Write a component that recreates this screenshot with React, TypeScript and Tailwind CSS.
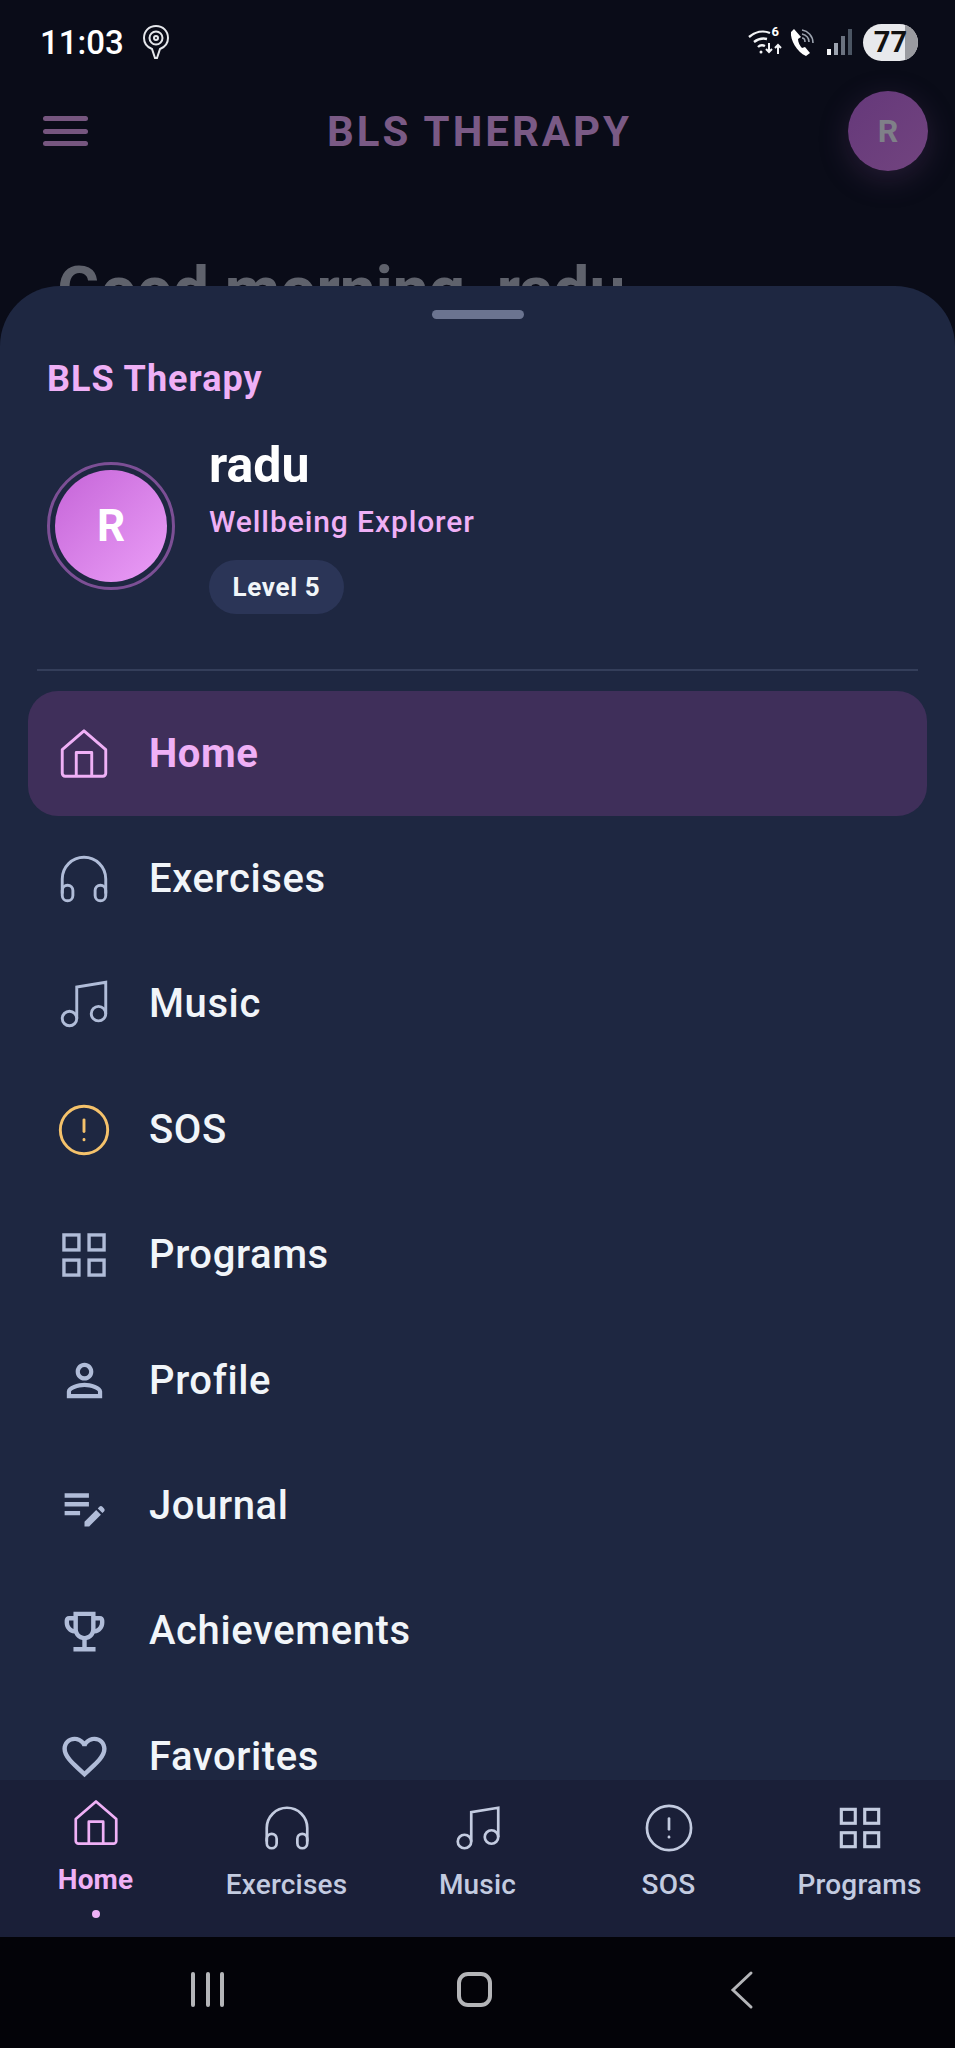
import React from 'react';
import { MdOutlinePersonOutline, MdEditNote, MdOutlineEmojiEvents, MdFavoriteBorder } from 'react-icons/md';

type IconProps = { className?: string };

function HomeIcon({ className }: IconProps) {
  return (
    <svg viewBox="0 0 24 24" fill="none" stroke="currentColor" strokeWidth="1.2" strokeLinejoin="round" className={className}>
      <path d="M3 10.2 12 2.4l9 7.8V20a1.2 1.2 0 0 1-1.2 1.2H4.2A1.2 1.2 0 0 1 3 20z" />
      <path d="M8.8 21.2v-9.8h6.4v9.8" />
    </svg>
  );
}

function HeadphonesIcon({ className }: IconProps) {
  return (
    <svg viewBox="0 0 24 24" fill="none" stroke="currentColor" strokeWidth="1.2" className={className}>
      <path d="M3 18v-6a9 9 0 0 1 18 0v6" />
      <rect x="3" y="14.6" width="4.4" height="6.4" rx="2.2" />
      <rect x="16.6" y="14.6" width="4.4" height="6.4" rx="2.2" />
    </svg>
  );
}

function MusicIcon({ className }: IconProps) {
  return (
    <svg viewBox="0 0 24 24" fill="none" stroke="currentColor" strokeWidth="1.2" className={className}>
      <path d="M9 18V5l12-2v13" />
      <circle cx="6" cy="18" r="3" />
      <circle cx="18" cy="16" r="3" />
    </svg>
  );
}

function AlertIcon({ className }: IconProps) {
  return (
    <svg viewBox="0 0 24 24" fill="none" stroke="currentColor" strokeWidth="1.2" strokeLinecap="round" className={className}>
      <circle cx="12" cy="12" r="9.8" />
      <path d="M12 7.8v4.8" />
      <path d="M12 15.9v.2" />
    </svg>
  );
}

function GridIcon({ className }: IconProps) {
  return (
    <svg viewBox="0 0 24 24" fill="none" stroke="currentColor" strokeWidth="1.4" className={className}>
      <rect x="3.7" y="3.7" width="6.2" height="6.2" />
      <rect x="14.1" y="3.7" width="6.2" height="6.2" />
      <rect x="3.7" y="14.1" width="6.2" height="6.2" />
      <rect x="14.1" y="14.1" width="6.2" height="6.2" />
    </svg>
  );
}

const menuItems = [
  { label: 'Home', icon: HomeIcon, big: true },
  { label: 'Exercises', icon: HeadphonesIcon, big: true },
  { label: 'Music', icon: MusicIcon, big: true },
  { label: 'SOS', icon: AlertIcon, big: true },
  { label: 'Programs', icon: GridIcon, big: true },
  { label: 'Profile', icon: MdOutlinePersonOutline, big: false },
  { label: 'Journal', icon: MdEditNote, big: false },
  { label: 'Achievements', icon: MdOutlineEmojiEvents, big: false },
  { label: 'Favorites', icon: MdFavoriteBorder, big: false },
];

const navItems = [
  { label: 'Home', icon: HomeIcon },
  { label: 'Exercises', icon: HeadphonesIcon },
  { label: 'Music', icon: MusicIcon },
  { label: 'SOS', icon: AlertIcon },
  { label: 'Programs', icon: GridIcon },
];

function StatusBar() {
  return (
    <div className="flex h-[72px] shrink-0 items-center justify-between pl-[40px] pr-[37px] pt-[12px]">
      <div className="flex items-center gap-[18px]">
        <span className="text-[33px] leading-none font-medium text-white">11:03</span>
        <svg viewBox="0 0 28 36" fill="none" stroke="#e5e7eb" strokeWidth="2" className="h-[36px] w-[28px]">
          <path d="M10 25C5 23 2 19 2 14 2 7 7 2 14 2s12 5 12 12c0 5-3 9-8 11l-3 9h-2z" />
          <circle cx="14" cy="14" r="6.5" />
          <circle cx="14" cy="14" r="2" />
        </svg>
      </div>
      <div className="flex items-center">
        <div className="relative h-[28px] w-[36px]">
          <svg viewBox="0 0 36 28" fill="none" stroke="#f3f4f6" strokeWidth="2.4" className="h-[28px] w-[36px]">
            <path d="M1 9c6-5 14-7 21-4" />
            <path d="M6 14c4-3 9-4 13-3" />
            <path d="M10 19c2-2 5-2 7-1" />
            <circle cx="13" cy="24" r="1.5" fill="#f3f4f6" stroke="none" />
            <path d="M21 15v9m-3-3 3 3 3-3" strokeWidth="2" />
            <path d="M30 26v-9m-3 3 3-3 3 3" strokeWidth="2" />
          </svg>
          <span className="absolute right-[5px] top-[-4px] text-[13px] leading-[16px] font-bold text-white">6</span>
        </div>
        <svg viewBox="0 0 26 30" fill="none" className="ml-[6px] h-[30px] w-[26px]">
          <path d="M4 2 1 5c-1 8 6 20 15 24l4-3-5-6-3 1c-2-2-4-6-4-9l3-2z" fill="#fff" />
          <path d="M12 3c6 1 11 6 11 13M12 7c4 1 7 4 7 8M12 11c2 0 3 2 3 4" stroke="#9ca3af" strokeWidth="1.6" />
        </svg>
        <svg viewBox="0 0 26 26" className="ml-[11px] h-[26px] w-[26px]">
          <rect x="0" y="20" width="4" height="6" fill="#f3f4f6" />
          <rect x="7" y="14" width="4" height="12" fill="#9ca3af" />
          <rect x="14" y="7" width="4" height="19" fill="#6b7280" />
          <rect x="21" y="0" width="4" height="26" fill="#4b5563" />
        </svg>
        <div className="relative ml-[10px] flex h-[37px] w-[55px] items-center justify-center overflow-hidden rounded-full bg-[#e8e9ec]">
          <div className="absolute inset-y-0 right-0 w-[13px] bg-[#9a9ba0]" />
          <span className="relative text-[29px] leading-none font-bold text-[#111]">77</span>
        </div>
      </div>
    </div>
  );
}

export default function App() {
  return (
    <div className="relative flex h-[2048px] w-[955px] flex-col overflow-hidden bg-[#0a0c18] font-['Roboto',sans-serif]">
      <StatusBar />

      {/* dimmed page behind the drawer */}
      <div className="flex h-[118px] shrink-0 items-center justify-between pl-[43px] pr-[27px]">
        <div className="flex w-[45px] flex-col gap-[7.5px]">
          <div className="h-[5px] rounded-full bg-[#76567f]" />
          <div className="h-[5px] rounded-full bg-[#76567f]" />
          <div className="h-[5px] rounded-full bg-[#76567f]" />
        </div>
        <h1 className="ml-[23px] pt-[2px] text-[42px] leading-none font-bold tracking-[3px] text-[#7a5a85]">BLS THERAPY</h1>
        <div className="flex h-[80px] w-[80px] items-center justify-center rounded-full bg-gradient-to-br from-[#65387a] to-[#72447f] shadow-[0_8px_30px_rgba(122,74,138,0.25)]">
          <span className="text-[32px] font-bold text-[#7f8088]">R</span>
        </div>
      </div>
      <div className="pl-[57px] pt-[69px] text-[64px] leading-none font-bold text-[#5f626c]">Good morning, radu</div>

      {/* drawer */}
      <div className="absolute inset-x-0 bottom-[268px] top-[286px] z-10 overflow-hidden rounded-t-[60px] bg-[#1e2741]">
        <div className="mx-auto mt-[24px] h-[9px] w-[92px] rounded-full bg-[#6b7490]" />
        <div className="pl-[47px] pt-[38px] text-[36px] leading-[44px] font-bold tracking-[1px] text-[#efb0f6]">BLS Therapy</div>
        <div className="flex items-start pl-[47px] pt-[34px]">
          <div className="mt-[27px] flex h-[128px] w-[128px] shrink-0 items-center justify-center rounded-full border-[3px] border-[#7c4f95]">
            <div className="flex h-[112px] w-[112px] items-center justify-center rounded-full bg-gradient-to-br from-[#c564d8] to-[#eb9ef7]">
              <span className="text-[44px] font-bold text-white">R</span>
            </div>
          </div>
          <div className="ml-[34px] flex flex-col items-start">
            <div className="text-[50px] leading-[60px] font-bold text-white">radu</div>
            <div className="mt-[7px] text-[30px] leading-[40px] font-medium tracking-[0.9px] text-[#efb0f6]">Wellbeing Explorer</div>
            <div className="mt-[18px] flex h-[54px] w-[135px] items-center justify-center rounded-full bg-[#2b3557]">
              <span className="text-[26px] font-bold tracking-[0.65px] text-[#f1f5f9]">Level 5</span>
            </div>
          </div>
        </div>
        <div className="mx-[37px] mt-[55px] h-[2px] bg-[#343e5a]" />
        <div className="mx-[28px] mt-[20px] flex flex-col">
          {menuItems.map((item, i) => {
            const Icon = item.icon;
            const active = i === 0;
            return (
              <div
                key={item.label}
                className={
                  active
                    ? 'flex h-[125.4px] shrink-0 items-center gap-[35px] rounded-[30px] bg-[#3f2f5a] pl-[26px]'
                    : 'flex h-[125.4px] shrink-0 items-center gap-[35px] pl-[26px]'
                }
              >
                <div className="flex h-[60px] w-[60px] shrink-0 items-center justify-center">
                  <Icon
                    className={
                      active
                        ? 'h-[58px] w-[58px] text-[#efb0f6]'
                        : item.label === 'SOS'
                          ? 'h-[58px] w-[58px] text-[#f5c26b]'
                          : item.big
                            ? 'h-[58px] w-[58px] text-[#b0bcd8]'
                            : 'h-[53px] w-[53px] text-[#b0bcd8]'
                    }
                  />
                </div>
                <span
                  className={
                    active
                      ? 'text-[40px] font-bold tracking-[0.6px] text-[#efb0f6]'
                      : 'text-[40px] font-medium tracking-[0.6px] text-[#f1f5f9]'
                  }
                >
                  {item.label}
                </span>
              </div>
            );
          })}
        </div>
      </div>

      {/* bottom tabs */}
      <div className="z-20 mt-auto grid h-[157px] shrink-0 grid-cols-5 bg-[#1a1f38]">
        {navItems.map((item, i) => {
          const Icon = item.icon;
          const active = i === 0;
          return (
            <div key={item.label} className={active ? 'flex flex-col items-center pt-[16px]' : 'flex flex-col items-center pt-[21px]'}>
              <Icon className={active ? 'h-[54px] w-[54px] text-[#efb0f6]' : 'h-[54px] w-[54px] text-[#c3cbe0]'} />
              <span
                className={
                  active
                    ? 'mt-[12px] text-[28px] leading-[36px] font-bold tracking-[0.1px] text-[#efb0f6]'
                    : 'mt-[12px] text-[28px] leading-[36px] font-medium tracking-[0.2px] text-[#c3cbe0]'
                }
              >
                {item.label}
              </span>
              {active && <div className="mt-[12px] h-[8px] w-[8px] rounded-full bg-[#efb0f6]" />}
            </div>
          );
        })}
      </div>

      {/* android nav */}
      <div className="z-20 flex h-[111px] shrink-0 items-center bg-[#030308] pb-[6px]">
        <div className="flex w-[414px] justify-end gap-[10.5px] pr-[190px]">
          <div className="h-[35px] w-[4px] rounded-sm bg-[#b4b5b8]" />
          <div className="h-[35px] w-[4px] rounded-sm bg-[#b4b5b8]" />
          <div className="h-[35px] w-[4px] rounded-sm bg-[#b4b5b8]" />
        </div>
        <div className="ml-[43px] h-[35px] w-[35px] rounded-[11px] border-[4px] border-[#b4b5b8]" />
        <svg viewBox="0 0 24 40" fill="none" stroke="#b4b5b8" strokeWidth="3" strokeLinecap="round" className="ml-[238px] h-[40px] w-[24px]">
          <path d="M21 3 3 20l18 17" />
        </svg>
      </div>
    </div>
  );
}
